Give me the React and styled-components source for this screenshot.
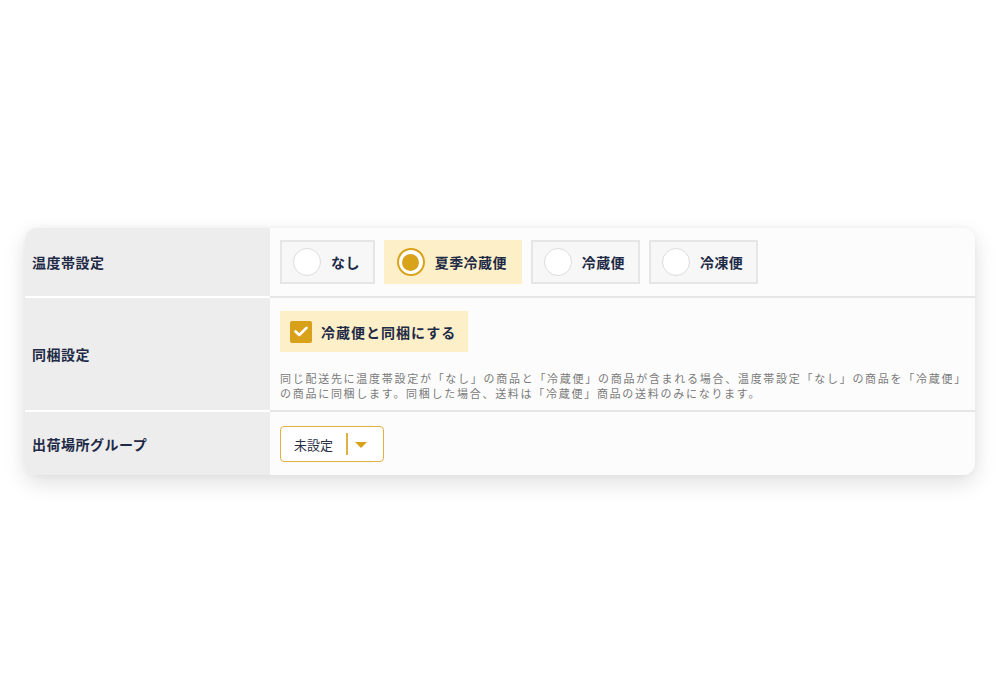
import React from 'react';
import styled, { createGlobalStyle } from 'styled-components';

const GlobalStyle = createGlobalStyle`
    html, body {
        margin: 0;
        padding: 0;
        background: #ffffff;
    }
    body {
        font-family: "Noto Sans CJK JP", "Noto Sans", sans-serif;
        color: #1e2a46;
    }
`;

const Page = styled.main`
    width: 1000px;
    height: 700px;
    box-sizing: border-box;
    padding: 228px 25px 0;
`;

const Card = styled.section`
    width: 950px;
    border-radius: 12px;
    overflow: hidden;
    background: #fcfcfc;
    box-shadow: 0 8px 22px rgba(0, 0, 0, 0.13), 0 0 6px rgba(0, 0, 0, 0.04);
`;

const Row = styled.div`
    display: grid;
    grid-template-columns: 245px 1fr;
    border-bottom: ${({ last }) => (last ? 'none' : '2px solid #e6e6e6')};
`;

const Label = styled.div`
    display: flex;
    align-items: center;
    padding-left: 7px;
    background: #ededed;
    font-size: 14px;
    font-weight: 700;
    letter-spacing: 0.5px;
    color: #1e2a46;
    box-shadow: ${({ last }) => (last ? 'none' : '0 2px 0 #ffffff')};
`;

const Field = styled.div`
    padding: ${({ pad }) => pad || '12px 10px 12px'};
    background: #fcfcfc;
`;

const Options = styled.div`
    display: flex;
    gap: 9px;
`;

const Option = styled.label`
    display: flex;
    align-items: center;
    gap: 10px;
    height: 44px;
    box-sizing: border-box;
    padding: 0 13px 0 11px;
    background: ${({ active }) => (active ? '#fdf0c8' : '#f7f7f7')};
    border: 2px solid ${({ active }) => (active ? '#fdf0c8' : '#e6e6e6')};
    font-size: 14px;
    font-weight: 700;
    letter-spacing: 0.4px;
    color: #1e2a46;
`;

const Radio = styled.span`
    width: 28px;
    height: 28px;
    box-sizing: border-box;
    border-radius: 50%;
    background: #ffffff;
    border: ${({ active }) => (active ? '2px solid #d9a21b' : '1px solid #dcdcdc')};
    display: flex;
    align-items: center;
    justify-content: center;

    &::after {
        content: '';
        display: ${({ active }) => (active ? 'block' : 'none')};
        width: 17px;
        height: 17px;
        border-radius: 50%;
        background: #d9a21b;
    }
`;

const CheckLabel = styled.label`
    display: inline-flex;
    align-items: center;
    gap: 9px;
    height: 41px;
    padding: 0 12px 0 10px;
    background: #fdf0c8;
    font-size: 14px;
    font-weight: 700;
    letter-spacing: 1px;
    color: #1e2a46;
`;

const CheckBox = styled.span`
    width: 22px;
    height: 22px;
    border-radius: 2px;
    background: #d9a01a;
    display: flex;
    align-items: center;
    justify-content: center;
`;

const Note = styled.p`
    margin: 19px 0 0;
    font-size: 11px;
    line-height: 15px;
    letter-spacing: 1.72px;
    color: #7a7a7a;
`;

const Select = styled.div`
    display: inline-flex;
    align-items: center;
    height: 36px;
    width: 104px;
    box-sizing: border-box;
    border: 1px solid #e0b040;
    border-radius: 4px;
    background: #ffffff;
    padding-left: 13px;
    font-size: 13px;
    color: #2a3147;
`;

const Divider = styled.span`
    width: 2px;
    height: 22px;
    background: #e0b040;
    margin: 0 7px 0 13px;
`;

const Caret = styled.span`
    width: 0;
    height: 0;
    border-left: 6px solid transparent;
    border-right: 6px solid transparent;
    border-top: 6px solid #d9a01a;
    margin-top: 2px;
`;

const temps = ['なし', '夏季冷蔵便', '冷蔵便', '冷凍便'];

const App = () => {
    const selected = '夏季冷蔵便';

    return (
        <>
            <GlobalStyle />
            <Page>
                <Card>
                    <Row>
                        <Label>温度帯設定</Label>
                        <Field>
                            <Options>
                                {temps.map(t => (
                                    <Option key={t} active={t === selected}>
                                        <Radio active={t === selected} />
                                        {t}
                                    </Option>
                                ))}
                            </Options>
                        </Field>
                    </Row>

                    <Row>
                        <Label>同梱設定</Label>
                        <Field pad="13px 10px 9px">
                            <CheckLabel>
                                <CheckBox>
                                    <svg width="14" height="11" viewBox="0 0 14 11">
                                        <path d="M1.5 5.5 L5.3 9 L12.5 1.8" fill="none" stroke="#fff" strokeWidth="2.6" strokeLinecap="round" strokeLinejoin="round" />
                                    </svg>
                                </CheckBox>
                                冷蔵便と同梱にする
                            </CheckLabel>
                            <Note>
                                同じ配送先に温度帯設定が「なし」の商品と「冷蔵便」の商品が含まれる場合、温度帯設定「なし」の商品を「冷蔵便」の商品に同梱します。同梱した場合、送料は「冷蔵便」商品の送料のみになります。
                            </Note>
                        </Field>
                    </Row>

                    <Row last>
                        <Label last>出荷場所グループ</Label>
                        <Field pad="14px 10px 13px">
                            <Select>
                                未設定
                                <Divider />
                                <Caret />
                            </Select>
                        </Field>
                    </Row>
                </Card>
            </Page>
        </>
    );
};

export default App;
